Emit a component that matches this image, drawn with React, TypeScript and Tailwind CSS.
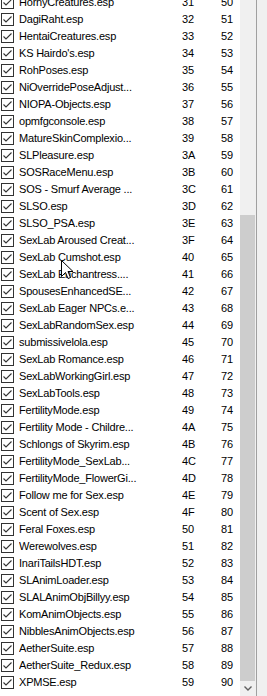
const plugins: [string, string, string][] = [
  ["HornyCreatures.esp", "31", "50"],
  ["DagiRaht.esp", "32", "51"],
  ["HentaiCreatures.esp", "33", "52"],
  ["KS Hairdo's.esp", "34", "53"],
  ["RohPoses.esp", "35", "54"],
  ["NiOverridePoseAdjust...", "36", "55"],
  ["NIOPA-Objects.esp", "37", "56"],
  ["opmfgconsole.esp", "38", "57"],
  ["MatureSkinComplexio...", "39", "58"],
  ["SLPleasure.esp", "3A", "59"],
  ["SOSRaceMenu.esp", "3B", "60"],
  ["SOS - Smurf Average ...", "3C", "61"],
  ["SLSO.esp", "3D", "62"],
  ["SLSO_PSA.esp", "3E", "63"],
  ["SexLab Aroused Creat...", "3F", "64"],
  ["SexLab Cumshot.esp", "40", "65"],
  ["SexLab Enchantress....", "41", "66"],
  ["SpousesEnhancedSE...", "42", "67"],
  ["SexLab Eager NPCs.e...", "43", "68"],
  ["SexLabRandomSex.esp", "44", "69"],
  ["submissivelola.esp", "45", "70"],
  ["SexLab Romance.esp", "46", "71"],
  ["SexLabWorkingGirl.esp", "47", "72"],
  ["SexLabTools.esp", "48", "73"],
  ["FertilityMode.esp", "49", "74"],
  ["Fertility Mode - Childre...", "4A", "75"],
  ["Schlongs of Skyrim.esp", "4B", "76"],
  ["FertilityMode_SexLab...", "4C", "77"],
  ["FertilityMode_FlowerGi...", "4D", "78"],
  ["Follow me for Sex.esp", "4E", "79"],
  ["Scent of Sex.esp", "4F", "80"],
  ["Feral Foxes.esp", "50", "81"],
  ["Werewolves.esp", "51", "82"],
  ["InariTailsHDT.esp", "52", "83"],
  ["SLAnimLoader.esp", "53", "84"],
  ["SLALAnimObjBillyy.esp", "54", "85"],
  ["KomAnimObjects.esp", "55", "86"],
  ["NibblesAnimObjects.esp", "56", "87"],
  ["AetherSuite.esp", "57", "88"],
  ["AetherSuite_Redux.esp", "58", "89"],
  ["XPMSE.esp", "59", "90"],
];

function CheckBox() {
  return (
    <svg width="13" height="13" viewBox="0 0 13 13" className="shrink-0">
      <rect x="0.5" y="0.5" width="12" height="12" fill="#fff" stroke="#333" />
      <path d="M2.5 6.5 L5 9 L10.5 3.5" fill="none" stroke="#333" strokeWidth="1.1" />
    </svg>
  );
}

function PluginRow({ name, hex, dec }: { name: string; hex: string; dec: string }) {
  return (
    <div className="flex h-[17px] items-center whitespace-nowrap">
      <div className="w-[19px] pl-[1px]">
        <CheckBox />
      </div>
      <div className="w-[163px] overflow-hidden tracking-[-0.2px]">{name}</div>
      <div className="w-[39px]">{hex}</div>
      <div>{dec}</div>
    </div>
  );
}

export default function App() {
  return (
    <div
      className="relative flex h-[696px] w-[267px] overflow-hidden bg-[#f0f0f0] text-[11px] text-black"
      style={{ fontFamily: '"Liberation Sans", Arial, sans-serif' }}
    >
      <div className="w-[240px] bg-white">
        <div className="mt-[-6px] flex flex-col">
          {plugins.map(([name, hex, dec]) => (
            <PluginRow key={hex} name={name} hex={hex} dec={dec} />
          ))}
        </div>
      </div>

      {/* scrollbar */}
      <div className="flex w-[16px] flex-col bg-[#f0f0f0]">
        <div className="h-[215px]" />
        <div className="h-[466px] w-[15px] bg-[#cdcdcd]" />
        <div className="flex flex-1 items-center justify-center">
          <svg width="8" height="5" viewBox="0 0 8 5">
            <path d="M0.5 0.5 L4 4 L7.5 0.5" fill="none" stroke="#606060" strokeWidth="1.4" />
          </svg>
        </div>
      </div>
      <div className="w-[1px] bg-[#a0a0a0]" />
      <div className="flex-1 bg-[#f0f0f0]" />

      {/* mouse pointer */}
      <svg
        className="absolute left-[61px] top-[260px]"
        width="13"
        height="20"
        viewBox="0 0 13 20"
      >
        <path
          d="M0.5 0.5 L0.5 16.5 L4.5 12.5 L7 18.5 L9.5 17.5 L7 11.5 L12 11.5 Z"
          fill="#fff"
          stroke="#000"
          strokeLinejoin="miter"
        />
      </svg>
    </div>
  );
}
